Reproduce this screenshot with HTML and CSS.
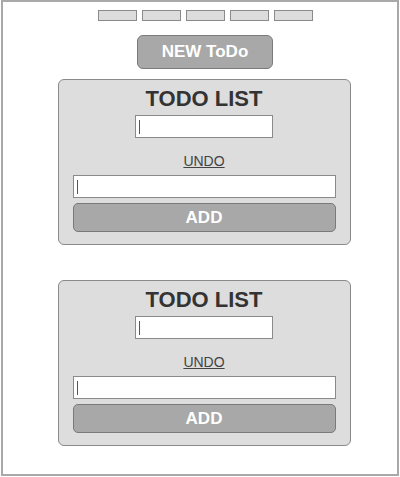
FILE: index.html
```html
<!DOCTYPE html>
<html>
<head>
<meta charset="utf-8">
<link rel="stylesheet" href="styles.css">
</head>
<body>
<div class="frame">
  <div class="tabs">
    <span class="tab"></span><span class="tab"></span><span class="tab"></span><span class="tab"></span><span class="tab"></span>
  </div>
  <button class="new-btn">NEW ToDo</button>
  <div class="card">
    <h1 class="title">TODO LIST</h1>
    <div class="field field-small"><span class="caret"></span></div>
    <a class="undo" href="#">UNDO</a>
    <div class="field field-wide"><span class="caret"></span></div>
    <button class="add-btn">ADD</button>
  </div>
  <div class="card">
    <h1 class="title">TODO LIST</h1>
    <div class="field field-small"><span class="caret"></span></div>
    <a class="undo" href="#">UNDO</a>
    <div class="field field-wide"><span class="caret"></span></div>
    <button class="add-btn">ADD</button>
  </div>
</div>
</body>
</html>
```

FILE: styles.css
```css
* { box-sizing: border-box; }
html, body { margin: 0; padding: 0; background: #fff; }
body { font-family: "Liberation Sans", Arial, sans-serif; }

.frame {
  margin-left: 1px;
  width: 398px;
  height: 476px;
  border: 2px solid #a9a9a9;
  padding: 8px 0 0 8px;
  display: flex;
  flex-direction: column;
  align-items: center;
}

.tabs {
  display: flex;
  gap: 5px;
  margin-left: 2px;
}
.tab {
  width: 39px;
  height: 11px;
  background: #dcdcdc;
  border: 1px solid #8a8a8a;
}

.new-btn {
  margin-top: 14px;
  margin-left: 2px;
  width: 136px;
  height: 34px;
  background: #a8a8a8;
  border: 1px solid #7a7a7a;
  border-radius: 6px;
  color: #fff;
  font-family: inherit;
  font-weight: bold;
  font-size: 17px;
  padding: 0;
}

.card {
  margin-top: 10px;
  width: 293px;
  height: 166px;
  background: #dddddd;
  border: 1px solid #8a8a8a;
  border-radius: 6px;
  padding: 6px 14px 0;
  display: flex;
  flex-direction: column;
  align-items: center;
}
.card + .card { margin-top: 35px; }

.title {
  margin: 0;
  font-size: 22px;
  line-height: 26px;
  font-weight: bold;
  color: #333;
}

.field {
  height: 23px;
  background: #fff;
  border: 1px solid #8a8a8a;
  display: flex;
  align-items: center;
  padding-left: 3px;
}
.field-small { width: 138px; margin-top: 3px; }
.field-wide { width: 100%; margin-top: 5px; }
.caret {
  width: 1px;
  height: 14px;
  background: #555;
}

.undo {
  margin-top: 15px;
  font-size: 14px;
  line-height: 17px;
  color: #444;
  text-decoration: underline;
}

.add-btn {
  margin-top: 5px;
  width: 100%;
  height: 29px;
  background: #a8a8a8;
  border: 1px solid #7a7a7a;
  border-radius: 5px;
  color: #fff;
  font-family: inherit;
  font-weight: bold;
  font-size: 17px;
  padding: 0;
}
```
